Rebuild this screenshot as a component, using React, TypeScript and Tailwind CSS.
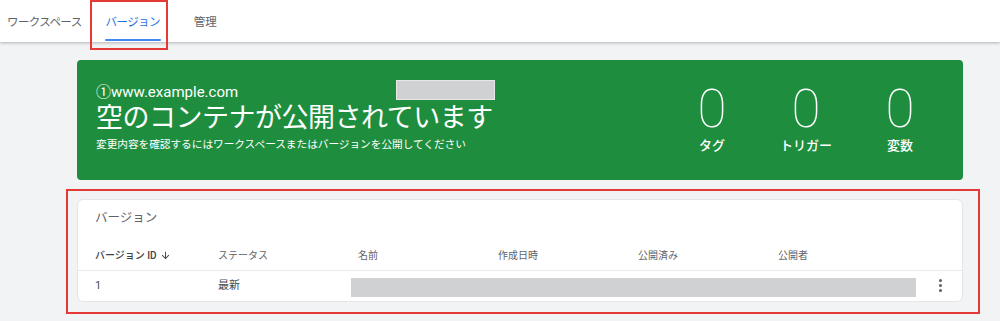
import React from "react";

const jp = "font-['Roboto','Noto_Sans_CJK_JP',sans-serif]";

function Counter({ n, label }: { n: string; label: string }) {
  return (
    <div className="w-[94px] flex flex-col items-center">
      <div className="text-[53px] leading-[53px] font-thin text-white font-['Roboto',sans-serif] h-[54px]">
        {n}
      </div>
      <div className="mt-[1px] text-[13px] leading-[16px] font-medium text-white">{label}</div>
    </div>
  );
}

export default function App() {
  const cols = ["ステータス", "名前", "作成日時", "公開済み", "公開者"];
  return (
    <div className={`relative w-[1000px] h-[321px] overflow-hidden bg-[#f1f3f4] ${jp}`}>
      {/* top tabs */}
      <div className="relative z-10 h-[42px] bg-white shadow-[0_1px_3px_rgba(60,64,67,0.35)] flex items-stretch">
        <div className="flex items-center pt-[3px] pl-[7px] pr-[23px] text-[11.5px] tracking-[-0.6px] text-[#5f6368]">
          ワークスペース
        </div>
        <div className="relative flex items-center pt-[3px] px-[1px] text-[11.5px] tracking-[-0.6px] text-[#1a73e8]">
          バージョン
          <div className="absolute left-0 right-0 bottom-[1px] h-[2px] rounded-full bg-[#4285f4]" />
        </div>
        <div className="flex items-center pt-[3px] pl-[33px] text-[11.5px] text-[#5f6368]">管理</div>
      </div>

      <div className="ml-[77px] w-[886px]">
        {/* green card */}
        <div className="relative mt-[18px] h-[120px] rounded-[4px] bg-[#1e8e3e] flex justify-between">
          <div className="pl-[19px] pt-[23px] text-white">
            <div className="text-[15px] leading-[18px]">①www.example.com</div>
            <div className="mt-[1px] text-[27px] leading-[32px] tracking-[-0.5px]">
              空のコンテナが公開されています
            </div>
            <div className="mt-[4px] text-[10.7px] leading-[14px] tracking-[-0.05px]">
              変更内容を確認するにはワークスペースまたはバージョンを公開してください
            </div>
          </div>
          <div className="absolute left-[319px] top-[20px] w-[99px] h-[20px] bg-[#d0d1d3] border border-[#e6e7e8]" />
          <div className="flex pt-[23px] pr-[16px]">
            <Counter n="0" label="タグ" />
            <Counter n="0" label="トリガー" />
            <Counter n="0" label="変数" />
          </div>
        </div>

        {/* versions card */}
        <div className="mt-[19px] h-[103px] rounded-[6px] bg-white border border-[#e3e5e8] overflow-hidden">
          <div className="pl-[17px] pt-[9px] h-[40px] text-[12.5px] leading-[18px] text-[#5f6368]">
            バージョン
          </div>
          <div className="flex items-center h-[31px] border-b border-[#e8eaed] text-[10px] text-[#5f6368]">
            <div className="w-[140px] pl-[17px] font-medium text-[#3c4043] flex items-center gap-[3px]">
              バージョン ID
              <svg width="11" height="11" viewBox="0 0 24 24" className="mt-[1px]">
                <path d="M20 12l-1.41-1.41L13 16.17V4h-2v12.17l-5.58-5.59L4 12l8 8 8-8z" fill="#3c4043" />
              </svg>
            </div>
            {cols.map((c) => (
              <div key={c} className="w-[140px]">
                {c}
              </div>
            ))}
          </div>
          <div className="relative flex items-center h-[31px] text-[11px] font-normal text-[#4a4d51]">
            <div className="w-[140px] pl-[17px]">1</div>
            <div className="w-[140px]">最新</div>
            <div className="absolute left-[273px] top-[7px] w-[565px] h-[19px] bg-[#d0d1d3]" />
            <div className="absolute left-[861px] top-[8px] flex flex-col gap-[2px]">
              <span className="w-[3px] h-[3px] rounded-full bg-[#5f6368]" />
              <span className="w-[3px] h-[3px] rounded-full bg-[#5f6368]" />
              <span className="w-[3px] h-[3px] rounded-full bg-[#5f6368]" />
            </div>
          </div>
        </div>
      </div>

      {/* annotation boxes */}
      <div className="absolute z-20 left-[90px] top-0 w-[78px] h-[50px] border-2 border-[#e53935]" />
      <div className="absolute z-20 left-[66px] top-[189px] w-[914px] h-[125px] border-2 border-[#e53935]" />
    </div>
  );
}
